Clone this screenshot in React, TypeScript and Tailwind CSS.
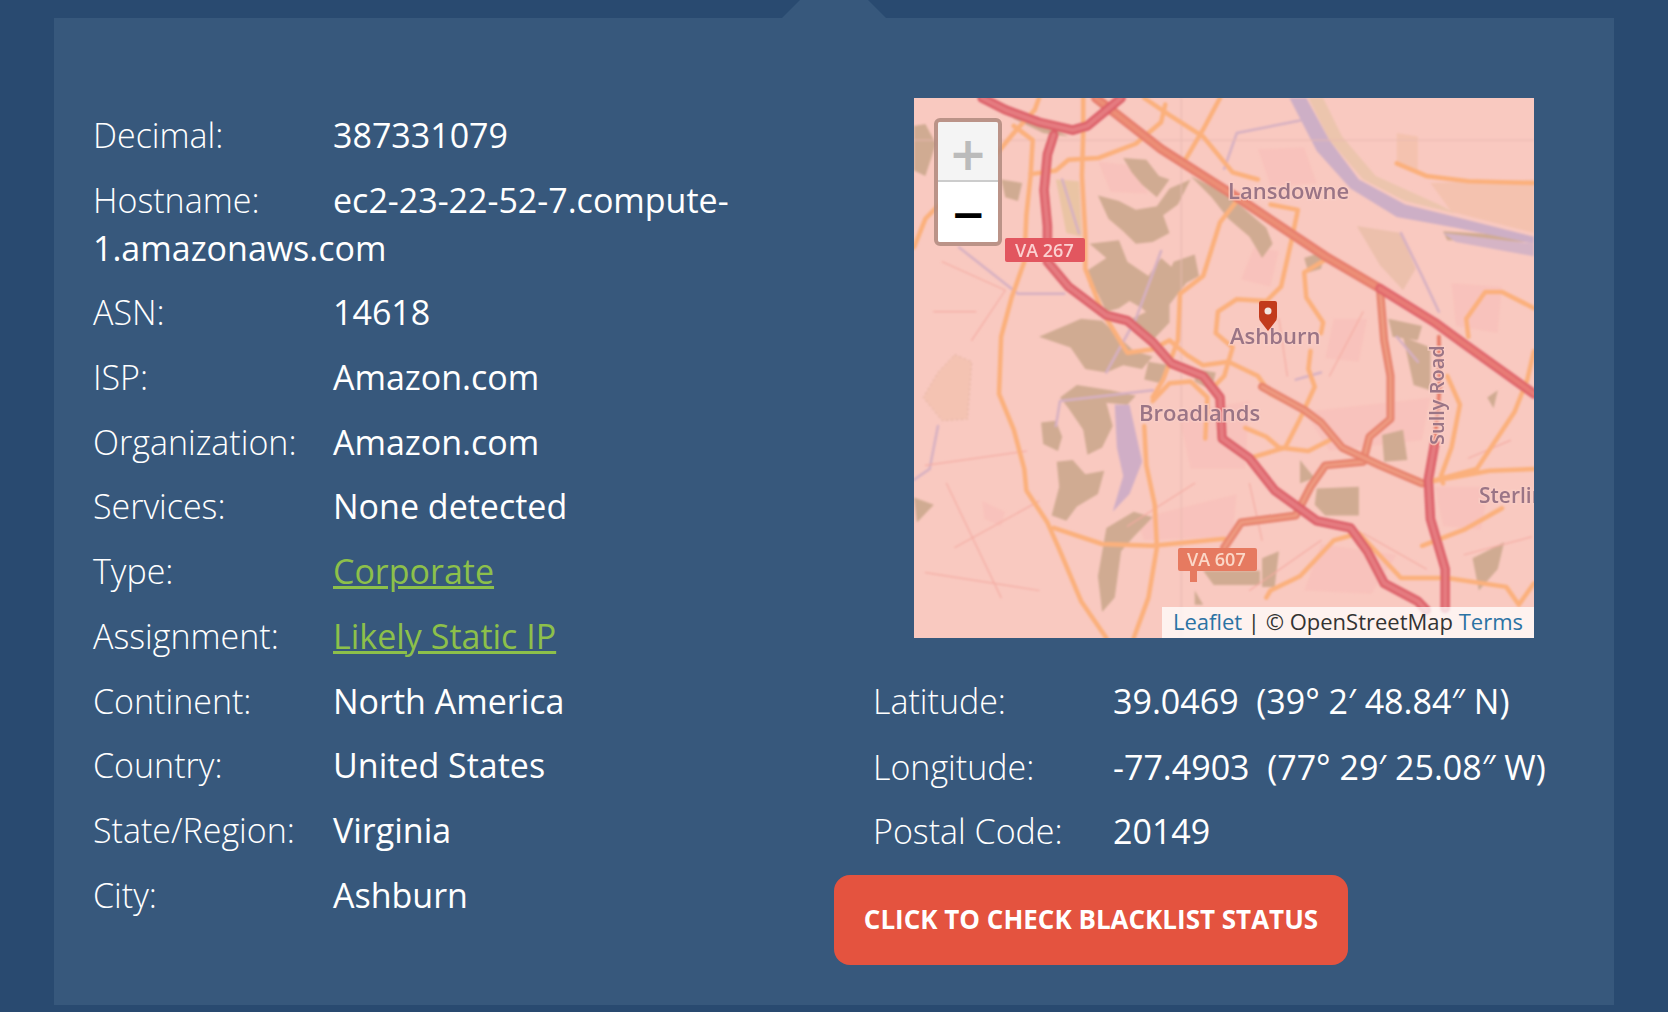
const sx = 620 / 1473;
const sy = 540 / 1511;

const orange = [
  "M330 22 L320 55 L270 120 L200 220 L110 300 L60 360 L33 440",
  "M270 100 L315 140 L310 240 L300 350 L295 480 L265 580 L240 690 L235 850 L270 950 L295 1060 L300 1120 L350 1210 L380 1290 L430 1430 L490 1533",
  "M435 22 L435 120 L432 240 L440 400 L440 500 L480 620 L540 735 L600 725 L640 700 L680 740 L720 770 L780 760 L850 800 L880 850 L950 890",
  "M600 870 L640 820 L690 815 L730 860 L725 975",
  "M310 235 L370 225 L400 195 L470 190 L560 150 L620 90 L630 40",
  "M580 22 L640 70 L720 130 L790 230 L850 250",
  "M760 22 L720 110 L670 210",
  "M800 310 L760 370 L720 520 L665 570 L660 700 L625 810 L600 860",
  "M880 320 L945 335 L930 420 L905 550 L870 590 L800 585 L755 620 L750 680 L790 720 L770 800 L745 830",
  "M1010 475 L960 510 L965 580 L1005 650 L1000 680 M975 730 L970 780 L985 830 L950 920 L915 1000 L830 1030",
  "M820 945 L870 970 L900 1000 L970 1010 L1020 980",
  "M580 940 L585 1050 L605 1160 L610 1280 L590 1420 L555 1533",
  "M365 1225 L480 1270 L600 1275 L770 1255",
  "M870 1420 L880 1400 L950 1360 L1030 1260 L1090 1240 L1190 1365 L1300 1365 L1440 1390 L1470 1440 L1506 1380",
  "M1350 690 L1345 640 L1390 565 L1430 565 L1506 610",
  "M1506 730 L1490 810 L1460 900 L1370 1060 L1260 1095 M1300 800 L1330 880 L1310 1000 L1285 1080 L1290 1100 M1260 1095 L1400 1065 L1506 1060",
  "M1240 1275 L1340 1230 L1430 1170",
  "M1180 205 L1250 240 L1350 255 L1506 260",
];

const tan = [
  "M530 190 L585 195 L615 240 L640 250 L610 300 L575 265 L550 230 Z",
  "M470 295 L520 310 L560 335 L610 325 L640 275 L690 250 L660 320 L625 350 L640 400 L600 425 L560 430 L530 395 L495 360 Z",
  "M445 505 L490 470 L450 430 L520 420 L540 480 L590 520 L620 470 L650 500 L640 590 L610 650 L575 610 L545 590 L520 610 L490 620 L470 570 L450 550 Z",
  "M640 600 L680 540 L710 520 L700 460 L650 480 L620 560 Z",
  "M550 640 L600 700 L640 650 L640 590 Z",
  "M590 760 L640 770 L620 820 L580 810 Z",
  "M700 780 L750 790 L740 840 L700 815 Z",
  "M330 690 L390 660 L430 640 L480 645 L520 690 L555 730 L600 745 L575 780 L530 770 L490 790 L440 780 L405 720 Z",
  "M380 860 L420 825 L500 840 L560 855 L540 880 L490 875 L505 940 L480 1000 L445 1020 L435 950 L400 890 Z",
  "M335 930 L370 925 L385 970 L375 1010 L340 990 Z",
  "M372 1040 L410 1035 L440 1075 L485 1065 L470 1130 L420 1165 L395 1205 L360 1190 L378 1110 Z",
  "M490 1225 L555 1180 L600 1195 L555 1250 L525 1290 L510 1420 L480 1460 L470 1360 Z",
  "M990 1115 L1090 1110 L1090 1190 L1010 1190 L985 1160 Z",
  "M860 1310 L900 1290 L890 1390 L860 1390 Z",
  "M1145 965 L1195 950 L1205 1035 L1150 1040 Z",
  "M1195 690 L1260 720 L1260 840 L1220 825 Z",
  "M1360 1310 L1435 1265 L1420 1340 L1375 1400 Z",
  "M33 100 L60 95 L85 150 L60 240 L33 225 Z",
  "M690 240 L775 290 L820 335 L870 385 L885 430 L860 470 L830 410 L780 360 L740 300 Z",
  "M950 1035 L985 1085 L950 1100 Z",
  "M720 1345 L855 1345 L855 1385 L745 1385 Z M700 1400 L720 1440 L700 1440 Z",
  "M33 1140 L80 1160 L40 1210 Z",
  "M1290 395 L1506 410 L1506 425 L1300 420 Z",
  "M1395 860 L1420 840 L1410 890 Z",
  "M250 40 L330 90 L400 130 L340 120 L270 80 Z",
  "M240 250 L290 260 L280 310 L250 300 Z",
  "M960 470 L1010 450 L1000 500 L970 510 Z",
  "M1160 640 L1240 660 L1230 700 L1170 690 Z",
];

const urban = [
  "M470 200 L550 210 L590 290 L500 285 Z",
  "M850 165 L960 160 L990 260 L880 270 Z",
  "M1030 640 L1110 640 L1090 760 L1010 750 Z",
  "M960 900 L1260 860 L1240 980 L1020 1010 Z",
  "M660 900 L830 870 L820 1060 L690 1060 Z",
  "M1310 540 L1430 550 L1420 680 L1320 660 Z",
  "M560 1200 L800 1130 L790 1250 L580 1260 Z",
  "M1000 1270 L1180 1300 L1120 1410 L960 1400 Z",
  "M1270 1110 L1400 1110 L1380 1230 L1290 1220 Z",
  "M195 1150 L250 1180 L240 1220 L200 1200 Z",
  "M840 440 L900 450 L880 550 L810 530 Z",
];

function P({ d, stroke, w, o = 1 }: { d: string; stroke: string; w: number; o?: number }) {
  return (
    <path
      d={d}
      fill="none"
      stroke={stroke}
      strokeWidth={w}
      strokeOpacity={o}
      strokeLinejoin="round"
      strokeLinecap="round"
      vectorEffect="non-scaling-stroke"
    />
  );
}

const redA = "M195 22 L250 55 L330 90 L410 112 L445 100 L525 22";
const redB = "M365 125 L350 180 L342 280 L350 380 L350 480 L400 550 L490 630 L540 645 L600 705 L645 765 L720 800 L760 860 L765 975 L830 1030 L890 1120 L990 1205 L1070 1225 L1110 1290 L1150 1380 L1230 1430 L1250 1455";
const redD = "M1270 990 L1255 1090 L1260 1200 L1295 1340 L1295 1450";
const diag1 = "M465 22 L620 165 L800 300 L1010 465 L1140 555";
const diag2 = "M1140 555 L1270 650 L1340 710 L1506 850";
const salE = "M1140 555 L1150 700 L1165 800 L1165 920 L1115 970 L1100 1040 L1010 1050 L975 1110 L940 1190 L810 1210 L770 1280";
const salF = "M860 830 L960 895 L1000 930 L1050 1000 L1140 1050 L1240 1100";

function Row({ label, children }: { label: string; children: React.ReactNode }) {
  return (
    <div className="mb-[16.7px]">
      <span className="inline-block w-[240px] font-light">{label}</span>
      <span>{children}</span>
    </div>
  );
}

function MapLabel({ x, y, size, children }: { x: number; y: number; size: number; children: string }) {
  return (
    <text
      x={x}
      y={y}
      fontSize={size}
      fontFamily="'Open Sans', sans-serif"
      fontWeight={600}
      fill="#9a7486"
      stroke="#f9cfc6"
      strokeOpacity={0.7}
      strokeWidth={3}
      paintOrder="stroke"
    >
      {children}
    </text>
  );
}

export default function App() {
  return (
    <div className="h-[1012px] overflow-hidden bg-[#294a70] px-[54px] font-['Open_Sans',sans-serif] text-[34px] leading-[48px] text-white">
      <div className="h-[18px]">
        <div className="ml-[728px] h-[18px] w-[104px] bg-[#37587c] [clip-path:polygon(18px_0,86px_0,100%_100%,0_100%)]" />
      </div>
      <div className="flex h-[987px] bg-[#37587c] pt-[80px]">
        <div className="w-[780px] pl-[39px] pt-[13px]">
          <Row label="Decimal:">387331079</Row>
          <Row label="Hostname:">ec2-23-22-52-7.compute-1.amazonaws.com</Row>
          <Row label="ASN:">14618</Row>
          <Row label="ISP:">Amazon.com</Row>
          <Row label="Organization:">Amazon.com</Row>
          <Row label="Services:">None detected</Row>
          <Row label="Type:">
            <a className="text-[#8dc04a] underline">Corporate</a>
          </Row>
          <Row label="Assignment:">
            <a className="text-[#8dc04a] underline">Likely Static IP</a>
          </Row>
          <Row label="Continent:">North America</Row>
          <Row label="Country:">United States</Row>
          <Row label="State/Region:">Virginia</Row>
          <Row label="City:">Ashburn</Row>
        </div>
        <div className="flex-1">
          <div className="relative ml-[80px] h-[540px] w-[620px] overflow-hidden bg-[#f9c9c0]">
            <svg width="620" height="540" viewBox="0 0 620 540" className="block">
              <defs>
                <filter id="soft" x="-5%" y="-5%" width="110%" height="110%">
                  <feGaussianBlur stdDeviation="1" />
                </filter>
                <filter id="softer" x="-5%" y="-5%" width="110%" height="110%">
                  <feGaussianBlur stdDeviation="0.6" />
                </filter>
              </defs>
              <g filter="url(#soft)">
                <g transform={`scale(${sx} ${sy}) translate(-33 -22)`}>
                  <path d="M130 740 L170 760 L160 920 L100 925 L55 860 L90 790 Z" fill="#f4c3b2" stroke="#dcae9c" strokeDasharray="2 3" vectorEffect="non-scaling-stroke" />
                  <path d="M1260 260 L1506 250 L1506 400 L1310 340 Z" fill="#f4c2af" />
                  <path d="M1180 120 L1230 130 L1230 230 L1180 205 Z" fill="#f4c2af" />
                  <path d="M970 22 L1005 22 L1050 130 L1130 240 L1280 320 L1320 345 L1200 310 L1100 250 L1020 140 Z" fill="#ecc5ad" />
                  <path d="M1085 380 L1190 400 L1225 500 L1195 560 L1140 490 Z" fill="#ecc0ac" />
                  <path d="M370 250 L425 255 L432 410 L395 400 Z" fill="#eac4a4" />
                  {urban.map((d, i) => (
                    <path key={i} d={d} fill="#f8b8b3" fillOpacity={0.4} />
                  ))}
                  {tan.map((d, i) => (
                    <path key={i} d={d} fill="#d0ab92" />
                  ))}
                  <path d="M510 880 L545 880 L560 960 L575 1040 L545 1130 L505 1180 L530 1080 L515 1000 Z" fill="#d0aec6" />
                  <path
                    d="M925 22 L965 22 L1020 140 L1090 250 L1200 320 L1320 355 L1506 410 L1506 430 L1320 385 L1180 355 L1070 275 L990 170 Z"
                    fill="#cdafc6"
                  />
                  <path d="M1290 400 L1506 430 L1506 465 L1320 425 Z" fill="#d5b4c5" />
                  <P d="M800 120 L950 85 M800 120 L770 220 M1190 400 L1240 520 L1280 620 M1180 690 L1230 760 M1000 790 L940 810 M600 840 L380 870 L370 940 M90 940 L70 1060 L33 1090 M140 440 L280 570 L390 570 M620 450 L560 640 L490 790 M385 250 L425 400" stroke="#d6b0c2" w={2.5} />
                  <P d="M33 140 L1506 140 M668 22 L668 1533" stroke="#e8b8b0" w={1} />
                  <P d="M100 480 L250 560 L170 700 M80 620 L180 620 M60 1050 L300 1010 M330 1150 L130 1280 M1250 1340 L1100 1240 M700 1100 L540 1220 M1000 1260 L830 1400 M1340 1300 L1500 1250 M1350 1030 L1450 980 M110 1100 L240 1420 M60 1350 L330 1400 M830 1100 L860 1260 M1100 620 L1020 800 M900 640 L920 800" stroke="#f4aca3" w={1.2} />
                  {orange.map((d, i) => (
                    <P key={i} d={d} stroke="#fbb07c" w={4.5} />
                  ))}
                  <P d={salE} stroke="#e6806c" w={8} />
                  <P d={salE} stroke="#ee9a80" w={3.5} />
                  <P d={salF} stroke="#e6806c" w={8} />
                  <P d={salF} stroke="#ee9a80" w={3.5} />
                  <P d={diag1} stroke="#e67c6c" w={9.5} />
                  <P d={diag1} stroke="#ec8e76" w={4.5} />
                  <P d={diag2} stroke="#df636a" w={9.5} />
                  <P d={diag2} stroke="#e87c76" w={4.5} />
                  <P d={redA} stroke="#dc5e68" w={9.5} />
                  <P d={redA} stroke="#e57c80" w={4.5} />
                  <P d={redB} stroke="#dc5e68" w={9.5} />
                  <P d={redB} stroke="#e57c80" w={4.5} />
                  <P d={redD} stroke="#dc5e68" w={9.5} />
                  <P d={redD} stroke="#e57c80" w={4.5} />
                  <P d="M1280 690 L1282 830 L1270 990" stroke="#e8806c" w={4} />
                </g>
              </g>
              <g filter="url(#softer)">
                <rect x="91" y="140" width="80" height="24" rx="2" fill="#e2565f" />
                <text x="101" y="159" fontSize="18" fontWeight="600" fontFamily="'Open Sans', sans-serif" fill="#fbd0d0">VA 267</text>
                <rect x="276" y="470" width="7" height="14" fill="#e67a60" />
                <rect x="264" y="450" width="79" height="23" rx="2" fill="#e67a60" />
                <text x="273" y="468" fontSize="18" fontWeight="600" fontFamily="'Open Sans', sans-serif" fill="#fbd8c8">VA 607</text>
                <MapLabel x={314} y={101} size={22}>Lansdowne</MapLabel>
                <MapLabel x={316} y={246} size={22}>Ashburn</MapLabel>
                <MapLabel x={225} y={323} size={22}>Broadlands</MapLabel>
                <MapLabel x={565} y={405} size={21}>Sterling</MapLabel>
                <g transform="translate(530 347) rotate(-90)">
                  <MapLabel x={0} y={0} size={20}>Sully Road</MapLabel>
                </g>
              </g>
              <g filter="url(#softer)">
                <path d="M345 205 Q345 203 347 203 L361 203 Q363 203 363 205 L363 219 Q363 222 361 224 L354 233 L347 224 Q345 222 345 219 Z" fill="#c23b1e" />
                <circle cx="354" cy="213" r="3.5" fill="#f3e6e0" />
              </g>
            </svg>
            <div className="absolute left-[20px] top-[20px] w-[68px] overflow-hidden rounded-[6px] border-[4px] border-[#b08a7e]/85 font-['DejaVu_Sans',sans-serif] font-bold">
              <div className="flex h-[60px] items-center justify-center border-b-2 border-[#ccc] bg-[#f4f4f4] pt-[6px] text-[46px] leading-none text-[#bbb]">+</div>
              <div className="flex h-[60px] items-center justify-center bg-white pt-[6px] text-[42px] leading-none text-black">−</div>
            </div>
            <div className="absolute bottom-0 right-0 flex h-[31px] w-[372px] items-center justify-center whitespace-pre bg-white/75 pb-[3px] text-[22px] leading-none text-[#333]">
              <span className="text-[#2b73a4]">Leaflet</span> | © OpenStreetMap <span className="text-[#2b73a4]">Terms</span>
            </div>
          </div>
          <div className="mt-[39px] pl-[39px]">
            <div className="mb-[18px] whitespace-pre"><span className="inline-block w-[240px] font-light">Latitude:</span>39.0469  (39° 2′ 48.84″ N)</div>
            <div className="mb-[16px] whitespace-pre"><span className="inline-block w-[240px] font-light">Longitude:</span>-77.4903  (77° 29′ 25.08″ W)</div>
            <div className="whitespace-pre"><span className="inline-block w-[240px] font-light">Postal Code:</span>20149</div>
          </div>
          <button className="mt-[20px] flex h-[90px] w-[514px] items-center justify-center rounded-[16px] bg-[#e4533f] pb-[2px] text-[26px] font-bold uppercase text-white">
            Click to check blacklist status
          </button>
        </div>
      </div>
    </div>
  );
}
